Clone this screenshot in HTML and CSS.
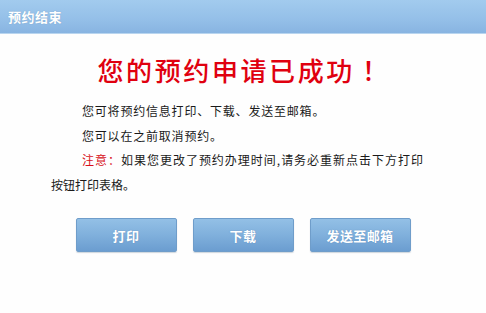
FILE: index.html
```html
<!DOCTYPE html>
<html lang="zh-CN">
<head>
<meta charset="utf-8">
<title>预约结束</title>
<link rel="stylesheet" href="styles.css">
</head>
<body>
<div class="dialog">
  <div class="header">预约结束</div>
  <div class="main">
    <h1 class="title">您的预约申请已成功<span class="bang">！</span></h1>
    <div class="content">
      <p class="line indent">您可将预约信息打印、下载、发送至邮箱。</p>
      <p class="line indent">您可以在之前取消预约。</p>
      <p class="line indent justify"><span class="warn">注意：</span>如果您更改了预约办理时间,请务必重新点击下方打印</p>
      <p class="line plain">按钮打印表格。</p>
    </div>
    <div class="actions">
      <button class="btn" type="button">打印</button>
      <button class="btn" type="button">下载</button>
      <button class="btn" type="button">发送至邮箱</button>
    </div>
  </div>
</div>
</body>
</html>
```

FILE: styles.css
```css
html, body {
  margin: 0;
  padding: 0;
  background: #ffffff;
}

body {
  font-family: "Noto Sans CJK SC", "Noto Sans", sans-serif;
  color: #1a1a1a;
}

.dialog {
  width: 486px;
  height: 313px;
  background: #fefefe;
}

.header {
  height: 33px;
  display: flex;
  align-items: center;
  padding-left: 8px;
  background: linear-gradient(to bottom, #a2cbee 0%, #94bfe8 60%, #88b4e1 100%);
  border-bottom: 1px solid #b9d5ef;
  color: #ffffff;
  font-size: 13px;
  font-weight: bold;
  letter-spacing: 0.5px;
  text-shadow: 0 0 1px rgba(90, 130, 170, 0.6);
}

.main {
  display: flex;
  flex-direction: column;
}

.title {
  margin: 18px 0 0 0;
  height: 36px;
  line-height: 36px;
  text-align: center;
  font-size: 26px;
  font-weight: 500;
  letter-spacing: 2.6px;
  color: #e0000f;
  padding-left: 2px;
}

.bang {
  margin-left: 7px;
}

.content {
  margin-top: 11px;
  padding-left: 51px;
  width: 372px;
  font-size: 12px;
}

.line {
  margin: 0;
  height: 24.5px;
  line-height: 24.5px;
  white-space: nowrap;
}

.indent {
  text-indent: 31px;
  letter-spacing: 0.8px;
}

.justify {
  letter-spacing: 0;
  text-align: justify;
  text-align-last: justify;
  text-justify: inter-character;
}

.plain {
  letter-spacing: 0;
}

.warn {
  color: #d8101a;
}

.actions {
  margin-top: 21px;
  display: flex;
  justify-content: center;
  gap: 16px;
}

.btn {
  width: 101px;
  height: 34px;
  padding: 0;
  border: 1px solid #6f9dca;
  border-radius: 2px;
  background: linear-gradient(to bottom, #93c0e6 0%, #80b0dc 50%, #6b9dd0 100%);
  color: #ffffff;
  font-family: "Noto Sans CJK SC", "Noto Sans", sans-serif;
  font-size: 13px;
  font-weight: bold;
  letter-spacing: 0.4px;
  text-shadow: 0 0 1px rgba(60, 100, 150, 0.5);
  box-shadow: 0 1px 1px rgba(120, 140, 160, 0.35);
}
```
